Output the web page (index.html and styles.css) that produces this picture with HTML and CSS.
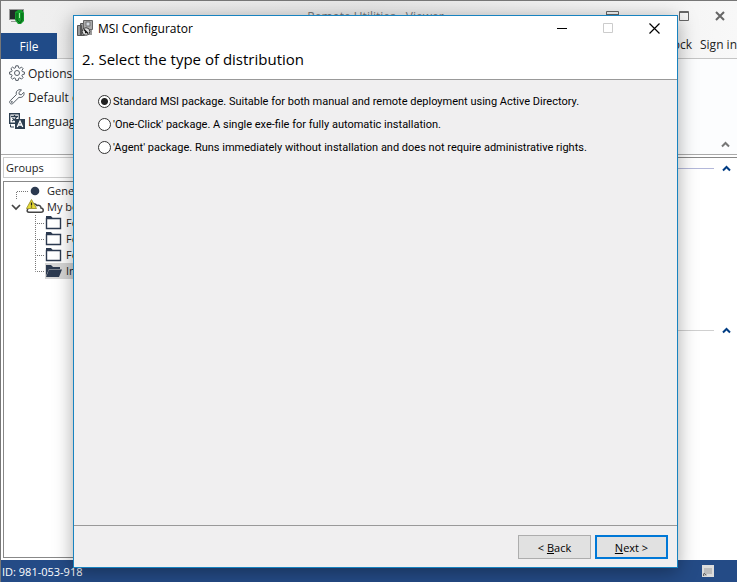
FILE: index.html
```html
<!DOCTYPE html>
<html lang="en">
  <head>
    <meta charset="UTF-8" />
    <meta name="viewport" content="width=device-width, initial-scale=1.0" />
    <title>MSI Configurator</title>
    <link rel="stylesheet" href="styles.css">
  </head>
  <body>
    <div class="app">
      <header class="titlebar">
        <svg class="app-icon" width="16" height="17" viewBox="0 0 16 17">
          <rect x="0.5" y="1.5" width="14" height="10" fill="#222c2a" stroke="#999"/>
          <path d="M2 13h7v1H2z" fill="#999"/>
          <path d="M6 4l3-2h4l2 3v8l-3 3H9l-3-4z" fill="#139a2b"/>
          <path d="M8 5v7l3 3 2-3V5" fill="none" stroke="#075c15"/>
          <path d="M10.500 5v5" stroke="#9df59c"/>
        </svg>
        <span class="app-title">Remote Utilities - Viewer</span>
        <div class="window-buttons">
          <button class="win-btn" aria-label="Ribbon options"><svg width="13" height="11" viewBox="0 0 13 11"><path d="M.5.5h12v10H.5zM0 3.500h13M6.500 9V5M4.500 7l2-2 2 2" fill="none" stroke="#666"/></svg></button>
          <button class="win-btn" aria-label="Maximize"><svg width="10" height="10" viewBox="0 0 10 10"><path d="M.5.5h9v9h-9zM0 1.500h10" fill="none" stroke="#666"/></svg></button>
          <button class="win-btn" aria-label="Close"><svg width="10" height="10" viewBox="0 0 10 10"><path d="M1 1l8 8M9 1L1 9" stroke="#666" stroke-width="2"/></svg></button>
        </div>
      </header>

      <nav class="tabs">
        <button class="file-tab">File</button>
        <div class="account">
          <a href="#">Lock</a>
          <a href="#">Sign in</a>
        </div>
      </nav>

      <section class="ribbon">
        <div class="ribbon-group">
          <button class="ribbon-btn">
            <svg width="16" height="16" viewBox="0 0 16 16" fill="none" stroke="#555d66"><path d="M6.800.8h2.400l.4 2 1.200.5 1.700-1.200 1.600 1.600-1.200 1.700.5 1.200 2 .4v2.200l-2 .4-.5 1.200 1.200 1.700-1.600 1.600-1.700-1.200-1.200.5-.4 2H6.800l-.4-2-1.200-.5-1.700 1.200-1.600-1.600 1.200-1.700-.5-1.200-2-.4V7l2-.4.5-1.200-1.200-1.700 1.600-1.600 1.700 1.200 1.200-.5z"/><circle cx="8" cy="8" r="2.500"/></svg>
            Options...
          </button>
          <button class="ribbon-btn">
            <svg width="16" height="16" viewBox="0 0 16 16" fill="none" stroke="#555d66"><path d="M14.800 3.300l-2.500 2.500-2-.3-.4-2L12.500 1C10.500.2 8.300 1 7.500 2.700c-.5 1-.4 2-.1 2.900L1.200 11.700c-1.700 1.800.8 4.500 2.700 2.700L10 8.300c3 1 6-2 4.800-5z"/><circle cx="2.800" cy="12.900" r=".6"/></svg>
            Default co
          </button>
          <button class="ribbon-btn">
            <svg width="16" height="16" viewBox="0 0 16 16"><path d="M.7.7h9.600v9.600H.7z" fill="#fff" stroke="#2c3e50" stroke-width="1.400"/><path d="M2 3.500h7M5.500 2v1.500M3 8c2-1 4-2.500 5-4.500M3.500 5c1 1.500 2.500 3 5 3.500" fill="none" stroke="#2c3e50" stroke-width="1.300"/><path d="M6 6h10v10H6z" fill="#2c3e50"/><path d="M8.300 14L11 8l2.700 6M9.300 12h3.400" fill="none" stroke="#fff" stroke-width="1.300"/><path d="M1.500 11.500v2.500H5" fill="none" stroke="#2c3e50"/></svg>
            Language
          </button>
        </div>
        <button class="collapse" aria-label="Collapse ribbon"><svg width="9" height="7" viewBox="0 0 9 7"><path d="M1 5.500L4.500 2 8 5.500" fill="none" stroke="#777" stroke-width="2"/></svg></button>
      </section>

      <main class="workspace">
        <aside class="sidebar">
          <div class="groups-title">Groups</div>
          <ul class="tree">
            <li class="tree-row root">
              <svg class="guide" width="13" height="16" viewBox="0 0 13 16"><path d="M.5 16V8.500H13" fill="none" stroke="#777" stroke-dasharray="1 1"/></svg>
              <svg width="16" height="16" viewBox="0 0 16 16"><circle cx="6" cy="8" r="4.300" fill="#2c3a50"/></svg>
              <span>General</span>
            </li>
            <li class="tree-row cloud">
              <svg width="12" height="16" viewBox="0 0 12 16"><path d="M2 6l4 4 4-4" fill="none" stroke="#444" stroke-width="1.700"/></svg>
              <svg width="18" height="16" viewBox="0 0 18 16"><path d="M3 13.300C.5 13 .5 9.500 3.500 9c0-4 5-6 7.500-2.500 2-1 4 .5 4 2.500 3 .3 3 4.300 0 4.300z" fill="#fff" stroke="#444" stroke-width="1.500"/><path d="M5.500.5L10.500 9.500H.500z" fill="#e8dc35" stroke="#a69c38"/><path d="M5.500 3.500v3M5.500 7.500v1" stroke="#222" stroke-width="1.300"/></svg>
              <span>My book</span>
            </li>
            <li class="tree-row child">
              <svg class="guide" width="10" height="16" viewBox="0 0 10 16"><path d="M.5 0v16M0 8.500h10" fill="none" stroke="#777" stroke-dasharray="1 1"/></svg>
              <svg width="17" height="16" viewBox="0 0 17 16"><path d="M1.500 3.500h14v10h-14z" fill="#fff" stroke="#2c3a50" stroke-width="1.400"/><path d="M1 1h5l2 2.500H1z" fill="#2c3a50"/></svg>
              <span>Folder 1</span>
            </li>
            <li class="tree-row child">
              <svg class="guide" width="10" height="16" viewBox="0 0 10 16"><path d="M.5 0v16M0 8.500h10" fill="none" stroke="#777" stroke-dasharray="1 1"/></svg>
              <svg width="17" height="16" viewBox="0 0 17 16"><path d="M1.500 3.500h14v10h-14z" fill="#fff" stroke="#2c3a50" stroke-width="1.400"/><path d="M1 1h5l2 2.500H1z" fill="#2c3a50"/></svg>
              <span>Folder 2</span>
            </li>
            <li class="tree-row child">
              <svg class="guide" width="10" height="16" viewBox="0 0 10 16"><path d="M.5 0v16M0 8.500h10" fill="none" stroke="#777" stroke-dasharray="1 1"/></svg>
              <svg width="17" height="16" viewBox="0 0 17 16"><path d="M1.500 3.500h14v10h-14z" fill="#fff" stroke="#2c3a50" stroke-width="1.400"/><path d="M1 1h5l2 2.500H1z" fill="#2c3a50"/></svg>
              <span>Folder 3</span>
            </li>
            <li class="tree-row child selected">
              <svg class="guide" width="10" height="16" viewBox="0 0 10 16"><path d="M.5 0v8.500H10" fill="none" stroke="#777" stroke-dasharray="1 1"/></svg>
              <svg width="17" height="16" viewBox="0 0 17 16"><path d="M1 2h5l2 2h7v2H4L1 13z" fill="#2c3a50"/><path d="M4 6.500h13L14 14H1z" fill="#2c3a50"/></svg>
              <span>Internet</span>
            </li>
          </ul>
        </aside>
        <div class="content">
          <div class="section">
            <hr class="section-line blue">
            <button class="section-toggle" aria-label="Collapse section"><svg width="9" height="7" viewBox="0 0 9 7"><path d="M1 5.500L4.500 2 8 5.500" fill="none" stroke="#003c83" stroke-width="2"/></svg></button>
          </div>
          <div class="section">
            <hr class="section-line">
            <button class="section-toggle" aria-label="Collapse section"><svg width="9" height="7" viewBox="0 0 9 7"><path d="M1 5.500L4.500 2 8 5.500" fill="none" stroke="#003c83" stroke-width="2"/></svg></button>
          </div>
        </div>
      </main>

      <footer class="statusbar">
        <span>ID: 981-053-918</span>
        <svg width="12" height="12" viewBox="0 0 12 12"><path d="M0 0h12v12H0z" fill="#dcdcdc"/><path d="M2 3h8v6H5v2H2z" fill="#bcbcbc"/><path d="M2 8l2 2M1.500 11V8.500" stroke="#666" fill="none"/></svg>
      </footer>
    </div>

    <form class="dialog" role="dialog" aria-labelledby="dialog-title">
      <div class="dialog-head">
        <div class="dialog-titlebar">
          <svg width="16" height="16" viewBox="0 0 16 16"><path d="M.5 5.500h4v10h-4zM3.500 3.500h4v12h-4z" fill="#999" stroke="#555"/><path d="M6.500.5h9v9h-9z" fill="#aaa" stroke="#666"/><path d="M9 2h4v4H9z" fill="#d5dbe2" stroke="#777"/><path d="M12 10h3v5h-3z" fill="#999"/><circle cx="9" cy="11.500" r="3.800" fill="#ddd" stroke="#444"/><path d="M7 9.500l4 4M8 12.500h1" stroke="#111" stroke-width="1.500"/></svg>
          <span id="dialog-title" class="dialog-name">MSI Configurator</span>
          <button type="button" class="dlg-btn" aria-label="Minimize"><svg width="10" height="11" viewBox="0 0 10 11"><path d="M0 5.500h10" stroke="#000"/></svg></button>
          <button type="button" class="dlg-btn" aria-label="Maximize" disabled><svg width="10" height="10" viewBox="0 0 10 10"><path d="M.5.5h9v9h-9z" fill="none" stroke="#ccc"/></svg></button>
          <button type="button" class="dlg-btn" aria-label="Close"><svg width="11" height="11" viewBox="0 0 11 11"><path d="M.5.500l10 10M10.500.5l-10 10" stroke="#000" stroke-width="1.200"/></svg></button>
        </div>
        <h1>2. Select the type of distribution</h1>
      </div>

      <div class="dialog-body">
        <label class="option"><input type="radio" name="type" checked>Standard MSI package. Suitable for both manual and remote deployment using Active Directory.</label>
        <label class="option"><input type="radio" name="type">'One-Click' package. A single exe-file for fully automatic installation.</label>
        <label class="option"><input type="radio" name="type">'Agent' package. Runs immediately without installation and does not require administrative rights.</label>
      </div>

      <div class="dialog-foot">
        <button type="button" class="btn">&lt; <u>B</u>ack</button>
        <button type="button" class="btn btn-default"><u>N</u>ext &gt;</button>
      </div>
    </form>
  </body>
</html>
```
FILE: styles.css
```css
* {
  box-sizing: border-box;
}

body {
  margin: 0;
  position: relative;
  height: 100vh;
  overflow: hidden;
  font-family: "Open Sans", "Noto Sans", sans-serif;
  font-size: 12px;
  color: #222;
}

button {
  font: inherit;
  color: inherit;
  border: none;
  background: none;
  padding: 0;
}

svg {
  display: block;
  flex: none;
}

.app {
  display: flex;
  flex-direction: column;
  height: 100%;
  border-top: 1px solid #777;
  border-left: 1px solid #777;
  background: #fff;
}

.titlebar {
  display: flex;
  align-items: center;
  height: 32px;
  padding: 0 12px 2px 8px;
  background: linear-gradient(to right, #f0f0f0, #e6e6e6 50%, #f8f8f8);
}

.app-title {
  flex: 1;
  padding-left: 120px;
  text-align: center;
  color: #777;
}

.window-buttons {
  display: flex;
}

.win-btn {
  display: flex;
  justify-content: flex-end;
  width: 36px;
}

.win-btn:first-child {
  justify-content: flex-start;
  width: 47px;
}

.tabs {
  display: flex;
  justify-content: space-between;
  height: 26px;
  background: linear-gradient(to right, #f0f0f0, #e6e6e6 50%, #f8f8f8);
  border-bottom: 1px solid #c4c4c4;
}

.file-tab {
  width: 56px;
  height: 26px;
  color: #fff;
  background: #204b88;
}

.account {
  display: flex;
  gap: 8px;
  line-height: 24px;
}

.account a {
  color: #222;
  text-decoration: none;
}

.ribbon {
  display: flex;
  justify-content: space-between;
  align-items: flex-end;
  height: 96px;
  padding: 2px 7px 6px 8px;
  background: #fcfdfe;
  border-bottom: 1px solid #aaa;
}

.ribbon-group {
  align-self: flex-start;
}

.ribbon-btn {
  display: flex;
  align-items: center;
  gap: 3px;
  height: 24px;
  white-space: nowrap;
}

.workspace {
  display: flex;
  flex: 1;
  min-height: 0;
  padding-top: 2px;
}

.sidebar {
  display: flex;
  flex-direction: column;
  gap: 3px;
  width: 200px;
  padding: 0 0 2px 2px;
  font-size: 11px;
}

.groups-title {
  height: 21px;
  padding-left: 2px;
  line-height: 20px;
  border: 1px solid #ccc;
}

.tree {
  flex: 1;
  margin: 0;
  padding: 1px 0 0 2px;
  list-style: none;
  border: 1px solid #888;
}

.tree-row {
  display: flex;
  height: 16px;
  line-height: 16px;
}

.root {
  padding-left: 10px;
}

.root span {
  padding-left: 2px;
}

.cloud {
  padding-left: 4px;
}

.cloud svg + svg {
  margin-left: 4px;
}

.cloud span {
  padding-left: 3px;
}

.child {
  padding-left: 29px;
}

.child span {
  flex: 1;
  padding-left: 4px;
}

.selected svg:not(.guide),
.selected span {
  background: #d5d5d5;
}

.content {
  flex: 1;
  padding-right: 6px;
  border-top: 1px solid #888;
}

.section {
  display: flex;
  align-items: flex-start;
  height: 162px;
  padding-top: 7px;
}

.section-line {
  flex: 1;
  height: 1px;
  margin: 3px 8px 0 0;
  border: none;
  background: #d0d0d0;
}

.blue {
  background: #b4b8da;
}

.statusbar {
  display: flex;
  align-items: center;
  justify-content: space-between;
  height: 22px;
  padding: 0 23px 0 1px;
  font-size: 11px;
  color: #fff;
  background: #244b86;
}

/* modal window over the app */
.dialog {
  position: absolute;
  top: 15px;
  right: 59px;
  bottom: 14px;
  left: 73px;
  display: flex;
  flex-direction: column;
  border: 1px solid #1883c0;
  background: #f0eff0;
  box-shadow: 0 4px 18px rgba(0, 0, 0, 0.35);
  font-size: 11px;
  color: #000;
}

.dialog-head {
  height: 64px;
  background: #fff;
  border-bottom: 1px solid #999;
}

.dialog-titlebar {
  display: flex;
  align-items: center;
  height: 24px;
  padding-left: 3px;
  font-size: 12px;
}

.dialog-name {
  flex: 1;
  padding-left: 5px;
}

.dlg-btn {
  display: flex;
  justify-content: center;
  width: 46px;
}

.dialog h1 {
  margin: 0;
  padding-left: 8px;
  font-size: 15px;
  font-weight: normal;
  line-height: 38px;
}

.dialog-body {
  flex: 1;
  padding: 10px 24px;
  font-family: Roboto, "Liberation Sans", sans-serif;
}

.option {
  display: flex;
  align-items: center;
  gap: 2px;
  height: 23px;
  white-space: nowrap;
}

.option input {
  appearance: none;
  width: 13px;
  height: 13px;
  margin: 0;
  border: 1px solid #333;
  border-radius: 50%;
  background: #fff;
}

.option input:checked {
  background: radial-gradient(circle, #222 3px, #fff 4px);
}

.dialog-foot {
  display: flex;
  justify-content: flex-end;
  gap: 4px;
  padding: 9px 9px 8px;
  border-top: 1px solid #999;
}

.btn {
  width: 73px;
  height: 24px;
  border: 1px solid #adadad;
  background: #e1e1e1;
}

.btn-default {
  border: 2px solid #0078d7;
}
```
